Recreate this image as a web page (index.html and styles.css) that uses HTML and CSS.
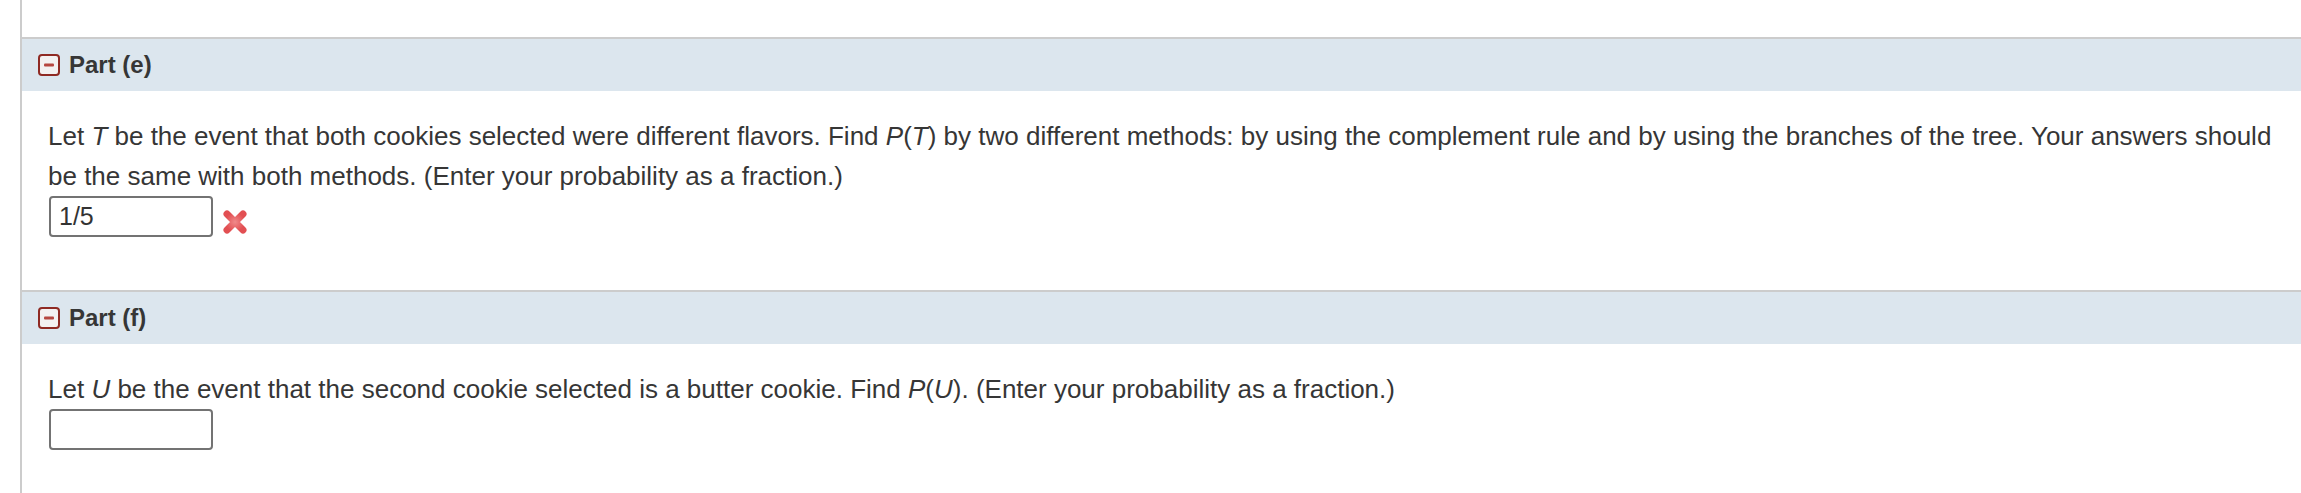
FILE: index.html
```html
<!DOCTYPE html>
<html lang="en">
<head>
<meta charset="utf-8">
<title>Parts</title>
<link rel="stylesheet" href="styles.css">
</head>
<body>
<div class="page">
  <section class="part part-e">
    <div class="part-head">
      <svg class="toggle" width="22" height="22" viewBox="0 0 22 22" aria-hidden="true">
        <rect x="1" y="1" width="20" height="20" rx="3" ry="3" fill="#f3f1f1" stroke="#8f2a23" stroke-width="2"/>
        <rect x="6" y="9.5" width="10" height="3" rx="1" fill="#b6463f"/>
      </svg>
      <span class="part-title">Part (e)</span>
    </div>
    <div class="part-body">
      <p class="question">Let <i>T</i> be the event that both cookies selected were different flavors. Find <i>P</i>(<i>T</i>) by two different methods: by using the complement rule and by using the branches of the tree. Your answers should be the same with both methods. (Enter your probability as a fraction.)</p>
      <div class="answer">
        <input class="answer-input" type="text" value="1/5">
        <svg class="wrong" width="26" height="26" viewBox="0 0 26 26" aria-hidden="true">
          <defs>
            <radialGradient id="xg" cx="50%" cy="50%" r="60%">
              <stop offset="0%" stop-color="#f08a8a"/>
              <stop offset="100%" stop-color="#e24f52"/>
            </radialGradient>
          </defs>
          <path d="M5 5 L21 21 M21 5 L5 21" stroke="url(#xg)" stroke-width="7" stroke-linecap="round" fill="none"/>
        </svg>
      </div>
    </div>
  </section>
  <section class="part part-f">
    <div class="part-head">
      <svg class="toggle" width="22" height="22" viewBox="0 0 22 22" aria-hidden="true">
        <rect x="1" y="1" width="20" height="20" rx="3" ry="3" fill="#f3f1f1" stroke="#8f2a23" stroke-width="2"/>
        <rect x="6" y="9.5" width="10" height="3" rx="1" fill="#b6463f"/>
      </svg>
      <span class="part-title">Part (f)</span>
    </div>
    <div class="part-body">
      <p class="question">Let <i>U</i> be the event that the second cookie selected is a butter cookie. Find <i>P</i>(<i>U</i>). (Enter your probability as a fraction.)</p>
      <div class="answer">
        <input class="answer-input" type="text" value="">
      </div>
    </div>
  </section>
</div>
</body>
</html>
```

FILE: styles.css
```css
html, body {
  margin: 0;
  padding: 0;
  background: #ffffff;
}

body {
  font-family: "Liberation Sans", Arial, sans-serif;
  color: #363636;
  font-size: 24px;
}

.page {
  margin-left: 20px;
  border-left: 2px solid #cccccc;
  padding-top: 37px;
  min-height: 456px;
}

.part {
  border-top: 2px solid #cccccc;
}

.part-head {
  display: flex;
  align-items: center;
  height: 52px;
  padding-left: 16px;
  background: #dce6ee;
}

.toggle {
  flex: none;
  display: block;
}

.part-title {
  margin-left: 9px;
  font-weight: bold;
  font-size: 24px;
  line-height: 52px;
  color: #363636;
}

.part-body {
  padding: 25px 20px 0 26px;
}

.part-e .part-body {
  padding-bottom: 53px;
}

.question {
  margin: 0;
  font-size: 26px;
  line-height: 40px;
}

.question i {
  font-style: italic;
}

.answer {
  display: flex;
  align-items: flex-end;
}

.answer-input {
  box-sizing: border-box;
  width: 164px;
  height: 41px;
  margin: 0 0 0 1px;
  padding: 0 8px;
  border: 2px solid #737373;
  border-radius: 4px;
  font-family: "Liberation Sans", Arial, sans-serif;
  font-size: 25px;
  color: #333333;
  background: #ffffff;
  outline: none;
}

.wrong {
  display: block;
  margin-left: 9px;
  margin-bottom: 2px;
}
```
